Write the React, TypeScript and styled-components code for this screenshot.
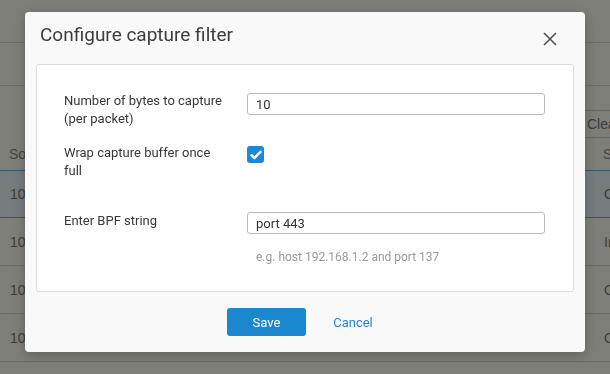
import styled, { createGlobalStyle } from 'styled-components';

const GlobalStyle = createGlobalStyle`
    html, body {
        margin: 0;
        padding: 0;
        overflow: hidden;
        background: #fcfcf2;
    }
    * {
        box-sizing: border-box;
    }
`;

const rows = [
    { source: '10.10.1.24', status: 'Captured', selected: true },
    { source: '10.10.1.31', status: 'Incoming', selected: false },
    { source: '10.10.1.7', status: 'Generated', selected: false },
    { source: '10.10.1.19', status: 'Captured', selected: false },
];

export default function App() {
    return (
        <>
            <GlobalStyle />
            <Page>
                <TopBar />
                <SubBar />
                <Toolbar>
                    <ClearButton>Clear</ClearButton>
                </Toolbar>
                <Table>
                    <HeaderRow>
                        <HeadCell>Source</HeadCell>
                        <HeadCell>Status</HeadCell>
                    </HeaderRow>
                    {rows.map((r, i) => (
                        <BodyRow key={i} $selected={r.selected}>
                            <Cell>{r.source}</Cell>
                            <Cell>{r.status}</Cell>
                        </BodyRow>
                    ))}
                </Table>
            </Page>

            <Overlay>
                <Modal>
                    <ModalHeader>
                        <Title>Configure capture filter</Title>
                        <CloseButton aria-label="Close">
                            <svg width="14" height="14" viewBox="0 0 14 14">
                                <path d="M1 1 L13 13 M13 1 L1 13" stroke="#555" strokeWidth="1.7" fill="none" />
                            </svg>
                        </CloseButton>
                    </ModalHeader>

                    <Panel>
                        <FormRow>
                            <Label>Number of bytes to capture (per packet)</Label>
                            <Control>
                                <TextInput defaultValue="10" $offset={1} />
                            </Control>
                        </FormRow>
                        <FormRow $gap={32}>
                            <Label>Wrap capture buffer once full</Label>
                            <Control>
                                <CheckBox>
                                    <svg width="12" height="10" viewBox="0 0 12 10">
                                        <path d="M1.5 5.2 L4.5 8 L10.5 1.8" stroke="#fff" strokeWidth="2.4" fill="none" strokeLinecap="round" strokeLinejoin="round" />
                                    </svg>
                                </CheckBox>
                            </Control>
                        </FormRow>
                        <FormRow $gap={0}>
                            <Label>Enter BPF string</Label>
                            <Control>
                                <TextInput defaultValue="port 443" />
                                <Hint>e.g. host 192.168.1.2 and port 137</Hint>
                            </Control>
                        </FormRow>
                    </Panel>

                    <Footer>
                        <SaveButton>Save</SaveButton>
                        <CancelButton>Cancel</CancelButton>
                    </Footer>
                </Modal>
            </Overlay>
        </>
    );
}

const Page = styled.div`
    width: 680px;
    font-family: "Liberation Sans", Arial, sans-serif;
    font-size: 14px;
`;

const TopBar = styled.div`
    height: 43px;
    border-bottom: 1px solid #dadad2;
`;

const SubBar = styled.div`
    height: 43px;
    border-bottom: 1px solid #dadad2;
`;

const Toolbar = styled.div`
    height: 52px;
    display: flex;
    align-items: flex-end;
    padding-left: 578px;
`;

const ClearButton = styled.div`
    height: 28px;
    padding: 0 8px;
    display: flex;
    align-items: center;
    border: 1px solid #d0d0c8;
    background: #fcfcf2;
    color: #777;
    font-size: 14px;
`;

const Table = styled.div`
    display: flex;
    flex-direction: column;
`;

const HeaderRow = styled.div`
    height: 32px;
    display: grid;
    grid-template-columns: 594px 1fr;
    align-items: center;
`;

const HeadCell = styled.div`
    padding-left: 9px;
    color: #8a8a86;
    white-space: nowrap;
`;

const BodyRow = styled.div<{ $selected: boolean }>`
    height: 48px;
    display: grid;
    grid-template-columns: 594px 1fr;
    align-items: center;
    background: ${(p) => (p.$selected ? '#ecf6fa' : 'transparent')};
    border-top: ${(p) => (p.$selected ? '1px solid #5cb4e8' : 'none')};
    border-bottom: 1px solid ${(p) => (p.$selected ? '#5cb4e8' : '#dadad2')};
`;

const Cell = styled.div`
    padding-left: 10px;
    color: #7c7c78;
    white-space: nowrap;
`;

const Overlay = styled.div`
    position: fixed;
    inset: 0;
    background: rgba(0, 0, 0, 0.5);
    display: flex;
    justify-content: center;
    align-items: flex-start;
    padding-top: 12px;
`;

const Modal = styled.div`
    width: 560px;
    background: #f9f9f9;
    border-radius: 4px;
    box-shadow: 0 3px 12px rgba(0, 0, 0, 0.25);
    font-family: Roboto, "Liberation Sans", sans-serif;
`;

const ModalHeader = styled.div`
    height: 52px;
    display: flex;
    justify-content: space-between;
    align-items: flex-start;
    padding: 12px 25px 0 15px;
`;

const Title = styled.h2`
    margin: 0;
    font-size: 19px;
    line-height: 22px;
    font-weight: 400;
    color: #3d3d3d;
`;

const CloseButton = styled.button`
    width: 20px;
    height: 20px;
    margin-top: 5px;
    padding: 0;
    border: none;
    background: transparent;
    display: flex;
    align-items: center;
    justify-content: center;
    cursor: pointer;
`;

const Panel = styled.div`
    margin: 0 11px;
    background: #fff;
    border: 1px solid #dcdcdc;
    border-radius: 3px;
    padding: 27px 28px 25px 27px;
`;

const FormRow = styled.div<{ $gap?: number }>`
    display: grid;
    grid-template-columns: 183px 1fr;
    align-items: start;
    margin-bottom: ${(p) => (p.$gap ?? 16)}px;
`;

const Label = styled.div`
    font-size: 13px;
    line-height: 18px;
    color: #383838;
    padding-right: 18px;
`;

const Control = styled.div`
    display: flex;
    flex-direction: column;
    align-items: flex-start;
`;

const TextInput = styled.input<{ $offset?: number }>`
    width: 298px;
    height: 22px;
    margin-top: ${(p) => p.$offset ?? 0}px;
    padding: 0 8px;
    border: 1px solid #b8bbbf;
    border-radius: 3px;
    font-family: Roboto, "Liberation Sans", sans-serif;
    font-size: 13px;
    color: #333;
    background: #fff;
    outline: none;
`;

const CheckBox = styled.div`
    width: 17px;
    height: 17px;
    margin-top: 2px;
    border-radius: 3px;
    background: #1e88d4;
    display: flex;
    align-items: center;
    justify-content: center;
`;

const Hint = styled.div`
    margin-top: 14px;
    padding-left: 9px;
    font-size: 12px;
    line-height: 18px;
    color: #9a9a9a;
`;

const Footer = styled.div`
    display: flex;
    justify-content: center;
    align-items: center;
    gap: 17px;
    padding: 16px 0 16px;
`;

const SaveButton = styled.button`
    width: 79px;
    height: 28px;
    border: none;
    border-radius: 3px;
    background: #1b87cf;
    color: #fff;
    font-family: Roboto, "Liberation Sans", sans-serif;
    font-size: 13px;
    cursor: pointer;
`;

const CancelButton = styled.button`
    width: 60px;
    height: 28px;
    border: none;
    background: transparent;
    color: #2a86cc;
    font-family: Roboto, "Liberation Sans", sans-serif;
    font-size: 13px;
    padding: 0;
    cursor: pointer;
`;
